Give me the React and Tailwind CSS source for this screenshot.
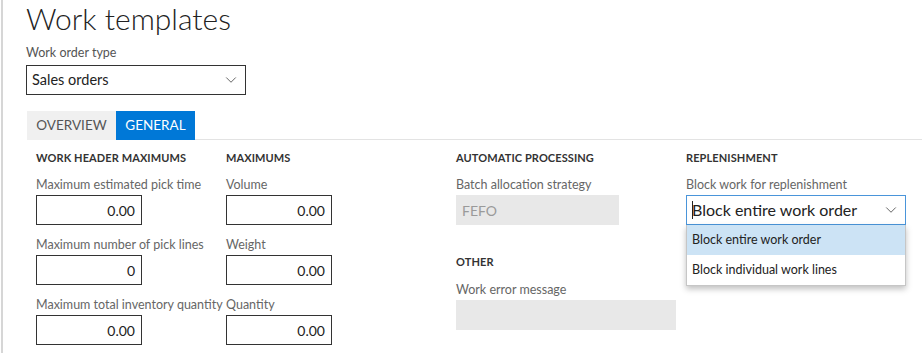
import { ChevronDown } from 'lucide-react';

const FONT = "font-['Lato','Liberation_Sans',sans-serif]";

function Field({ label, value, width = 'w-[106px]' }) {
  return (
    <div className="mb-[10px]">
      <div className="h-[20px] leading-[20px] text-[12.5px] text-[#666] whitespace-nowrap">{label}</div>
      <div className={`${width} h-[30px] border border-[#333] flex items-center justify-end pr-[6px] text-[14px] text-[#222]`}>
        {value}
      </div>
    </div>
  );
}

function SectionHeader({ children, className = '' }) {
  return (
    <div className={`leading-[16px] text-[11px] font-bold text-[#333] tracking-[0.1px] ${className}`}>
      {children}
    </div>
  );
}

export default function App() {
  return (
    <div className={`${FONT} w-[922px] h-[353px] overflow-hidden bg-white flex`}>
      {/* left edge rule */}
      <div className="w-[1px] bg-white" />
      <div className="w-[2px] bg-[#d6d6d6]" />

      <div className="flex-1 flex flex-col">
        {/* ── Title + work order type ───────────────────── */}
        <div className="pl-[23px]">
          <div className="h-[36px] leading-[36px] text-[30px] font-light text-[#222]">Work templates</div>
          <div className="h-[26px] pt-[8px] leading-[18px] text-[12.5px] text-[#555]">Work order type</div>
          <div className="mt-[3px] w-[220px] h-[30px] border border-[#333] flex items-center justify-between pl-[5px] pr-[5px] text-[14.5px] text-[#222]">
            <span>Sales orders</span>
            <ChevronDown size={18} strokeWidth={1.2} className="text-[#555]" />
          </div>
        </div>

        {/* ── Tabs ──────────────────────────────────────── */}
        <div className="mt-[16px] flex pl-[24px]">
          <div className="w-[89px] h-[29px] bg-[#f0f0f0] text-[13.5px] text-[#555] flex items-center justify-center">OVERVIEW</div>
          <div className="w-[79px] h-[29px] bg-[#0078d7] text-[13.5px] text-white flex items-center justify-center">GENERAL</div>
          <div className="flex-1 border-b border-[#e3e3e3]" />
        </div>

        {/* ── Form grid ─────────────────────────────────── */}
        <div className="flex pl-[33px] pt-[10px]">
          <div className="w-[190px]">
            <SectionHeader className="mb-[9px]">WORK HEADER MAXIMUMS</SectionHeader>
            <Field label="Maximum estimated pick time" value="0.00" />
            <Field label="Maximum number of pick lines" value="0" />
            <Field label="Maximum total inventory quantity" value="0.00" />
          </div>

          <div className="w-[230px]">
            <SectionHeader className="mb-[9px]">MAXIMUMS</SectionHeader>
            <Field label="Volume" value="0.00" />
            <Field label="Weight" value="0.00" />
            <Field label="Quantity" value="0.00" />
          </div>

          <div className="w-[230px]">
            <SectionHeader className="mb-[9px]">AUTOMATIC PROCESSING</SectionHeader>
            <div className="h-[20px] leading-[20px] text-[12.5px] text-[#666]">Batch allocation strategy</div>
            <div className="w-[163px] h-[30px] bg-[#e8e8e8] flex items-center pl-[6px] text-[14px] text-[#9a9a9a]">FEFO</div>
            <SectionHeader className="mt-[29px] mb-[10px]">OTHER</SectionHeader>
            <div className="h-[20px] leading-[20px] text-[12.5px] text-[#666]">Work error message</div>
            <div className="w-[220px] h-[30px] bg-[#e8e8e8]" />
          </div>

          <div className="w-[220px]">
            <SectionHeader className="mb-[9px]">REPLENISHMENT</SectionHeader>
            <div className="h-[20px] leading-[20px] text-[12.5px] text-[#666]">Block work for replenishment</div>
            <div className="relative">
              <div className="w-[220px] h-[30px] border border-[#4a95da] flex items-center justify-between pl-[5px] pr-[5px] text-[16px] text-[#222]">
                <span className="flex items-center">
                  <span className="w-[1px] h-[18px] bg-[#222] mr-[-1px]" />
                  <span>Block entire work order</span>
                </span>
                <ChevronDown size={18} strokeWidth={1.2} className="text-[#555]" />
              </div>
              {/* open dropdown */}
              <div className="absolute left-0 top-[30px] w-[220px] bg-white border border-[#c6c6c6] border-t-0 shadow-[0_3px_6px_rgba(0,0,0,0.25)] z-10">
                <div className="h-[30px] bg-[#cce3f5] flex items-center pl-[5px] text-[12.5px] text-[#222]">Block entire work order</div>
                <div className="h-[30px] flex items-center pl-[5px] text-[12.5px] text-[#222]">Block individual work lines</div>
              </div>
            </div>
          </div>
        </div>
      </div>
    </div>
  );
}
